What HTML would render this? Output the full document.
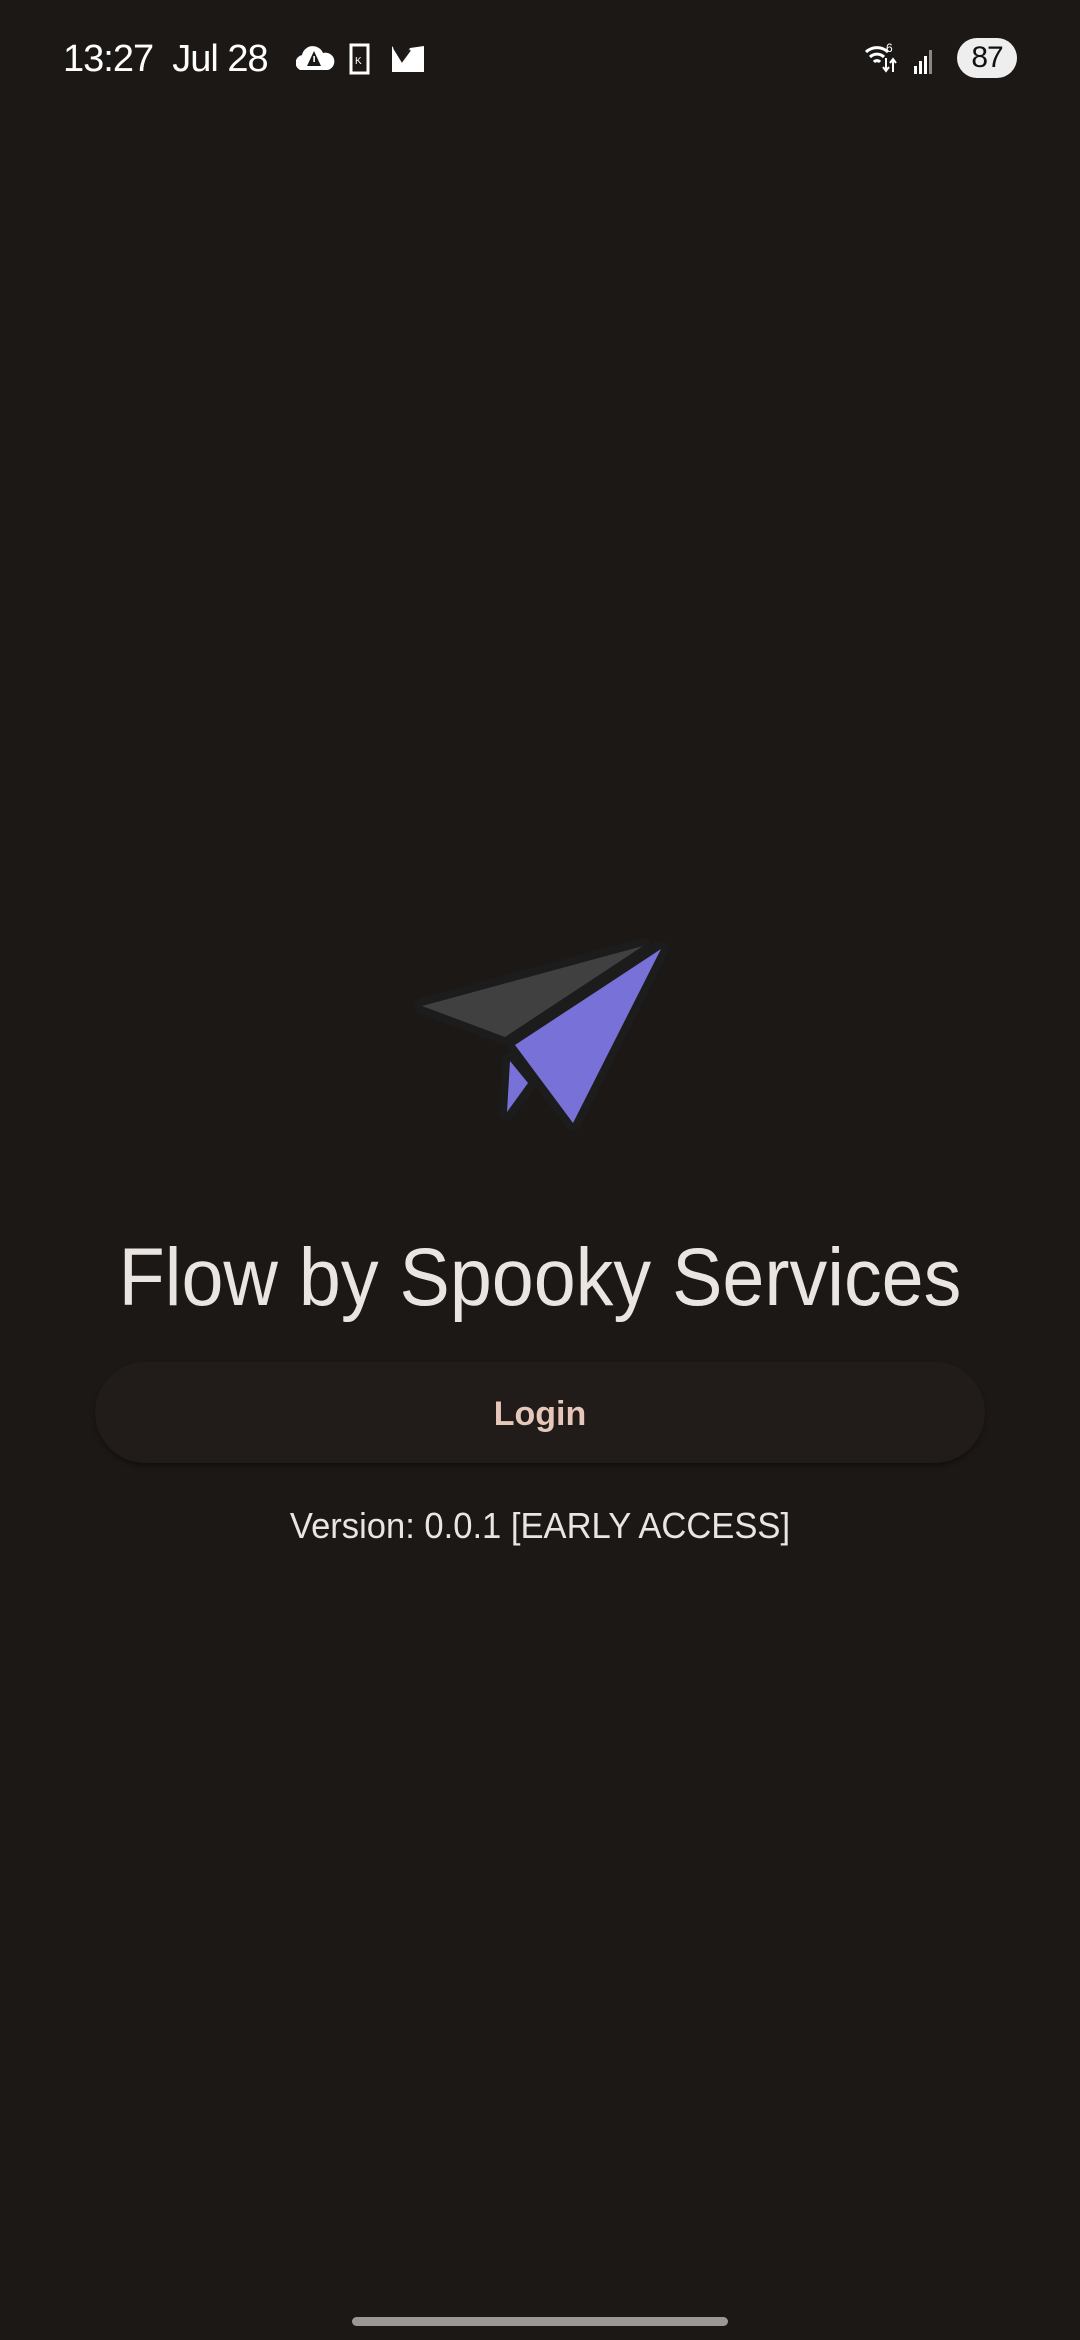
<!DOCTYPE html>
<html><head><style>
html,body{margin:0;padding:0;background:#1c1816;}
body{width:1080px;height:2340px;position:relative;overflow:hidden;font-family:"Liberation Sans",sans-serif;}
.abs{position:absolute;}
</style></head><body>
<div class="abs" style="left:63px;top:38px;color:#fff;font-size:38px;letter-spacing:-1px;">13:27&nbsp; Jul 28</div>
<svg class="abs" style="left:296px;top:42px" width="134" height="34" viewBox="0 0 134 34">
<path d="M4 28 a8 8 0 0 1 2-15 a11 11 0 0 1 21-2 a8 8 0 0 1 5 17z" fill="#fff"/>
<path d="M18 9 L25 24 L11 24z" fill="#1c1816"/><rect x="17.3" y="14" width="1.6" height="6" fill="#fff"/>
<rect x="55" y="3" width="17" height="28" fill="none" stroke="#fff" stroke-width="3"/><text x="59" y="22" font-size="10" fill="#fff" font-family="Liberation Sans">K</text>
<path d="M96 4 L106 18 L114 6 L128 4 L128 30 L96 30z" fill="#fff"/><path d="M99 10 L106 22 L115 10 L115 28 L99 28z" fill="#fff"/><path d="M98 6 L106 19 L114 8" fill="none" stroke="#1c1816" stroke-width="2"/>
</svg>
<svg class="abs" style="left:864px;top:40px" width="80" height="36" viewBox="0 0 80 36">
<path d="M2 12 a16 16 0 0 1 22 0 M6 17 a10 10 0 0 1 14 0 M10 22 a4 4 0 0 1 6 0" fill="none" stroke="#fff" stroke-width="3"/>
<text x="22" y="12" font-size="12" fill="#fff" font-family="Liberation Sans">6</text>
<path d="M22 18 v12 M19 27 l3 4 l3-4 M29 32 v-12 M26 23 l3-4 l3 4" fill="none" stroke="#fff" stroke-width="2"/>
<rect x="50" y="26" width="3" height="8" fill="#fff"/><rect x="55" y="21" width="3" height="13" fill="#fff"/><rect x="60" y="16" width="3" height="18" fill="#fff"/><rect x="65" y="10" width="3" height="24" fill="#888"/>
</svg>
<div class="abs" style="left:957px;top:38px;width:60px;height:40px;border-radius:20px;background:#eee;color:#111;font-size:30px;line-height:40px;text-align:center;letter-spacing:-1px;">87</div>

<svg class="abs" style="left:380px;top:900px" width="320" height="250" viewBox="380 900 320 250">
<g stroke="#1d1c1c" stroke-width="16" stroke-linejoin="round" fill="#1d1c1c">
<path d="M422 1006 L643 946 L505 1037z"/><path d="M515 1045 L661 949 L573 1123z"/><path d="M510 1061 L528 1083 L507 1112z"/>
</g>
<path d="M422 1006 L643 946 L505 1037z" fill="#404040"/>
<path d="M515 1045 L661 949 L573 1123z" fill="#7872d8"/>
<path d="M510 1061 L528 1083 L507 1112z" fill="#7872d8"/>
</svg>

<div class="abs" style="left:0;width:1080px;top:1228px;text-align:center;color:#ebe5e1;font-size:82px;line-height:100px;transform:scaleX(0.92);">Flow by Spooky Services</div>
<div class="abs" style="left:95px;top:1362px;width:890px;height:101px;border-radius:51px;background:#211c1a;box-shadow:0 3px 5px rgba(0,0,0,0.35);color:#e6c8ba;font-size:34px;line-height:104px;text-align:center;font-weight:bold;">Login</div>
<div class="abs" style="left:0;width:1080px;top:1503px;text-align:center;color:#ebe5e1;font-size:36px;line-height:46px;transform:scaleX(0.96);">Version: 0.0.1 [EARLY ACCESS]</div>
<div class="abs" style="left:352px;top:2317px;width:376px;height:9px;border-radius:5px;background:#9a9896;"></div>
</body></html>
